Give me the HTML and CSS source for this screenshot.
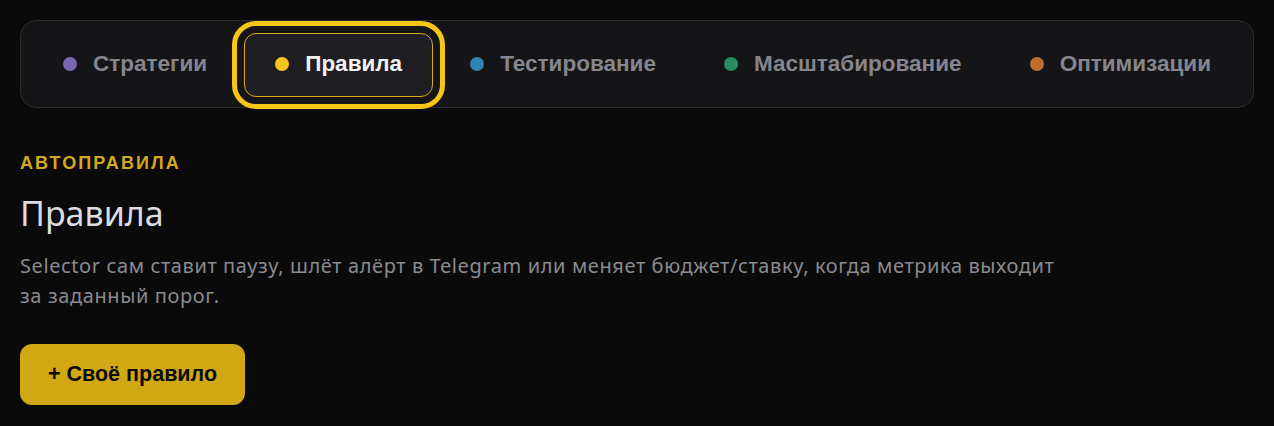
FILE: index.html
```html
<!DOCTYPE html>
<html lang="ru">
<head>
<meta charset="UTF-8">
<meta name="viewport" content="width=device-width, initial-scale=1.0">
<title>Правила</title>
<link rel="stylesheet" href="styles.css">
</head>
<body>
<div class="page">
    <nav class="tabs">
        <button class="tab"><span class="dot dot-purple"></span>Стратегии</button>
        <button class="tab active"><span class="dot dot-yellow"></span>Правила</button>
        <button class="tab"><span class="dot dot-blue"></span>Тестирование</button>
        <button class="tab"><span class="dot dot-green"></span>Масштабирование</button>
        <button class="tab"><span class="dot dot-orange"></span>Оптимизации</button>
    </nav>

    <section class="section">
        <div class="eyebrow">Автоправила</div>
        <h1>Правила</h1>
        <p class="lead">Selector сам ставит паузу, шлёт алёрт в Telegram или меняет бюджет/ставку, когда метрика выходит за заданный порог.</p>
        <button class="btn-primary">+ Своё правило</button>
    </section>
</div>
</body>
</html>
```

FILE: styles.css
```css
body {
    margin: 0;
    background-color: #0a0a0a;
    font-family: "Noto Sans", Roboto, sans-serif;
    color: #dcdce0;
}
.page {
    padding: 20px;
}
.tabs {
    display: flex;
    justify-content: space-between;
    padding: 12px 11px 10px;
    background-color: #151517;
    border: 1px solid #2c2c30;
    border-radius: 16px;
}
.tab {
    display: flex;
    align-items: center;
    gap: 16px;
    height: 64px;
    padding: 0 30px 3px;
    background: transparent;
    border: 1px solid transparent;
    border-radius: 12px;
    font-family: "Liberation Sans", Arial, sans-serif;
    font-size: 22.5px;
    font-weight: bold;
    color: #85858d;
    cursor: pointer;
}
.tab.active {
    color: #f2f2f4;
    background-color: #1f1f23;
    border-color: #d6ab18;
    outline: 5px solid #f5c518;
    outline-offset: 7px;
}
.dot {
    width: 14px;
    height: 14px;
    border-radius: 50%;
}
.dot-purple { background-color: #7a66b5; }
.dot-yellow { background-color: #f5c518; }
.dot-blue { background-color: #2f84b0; }
.dot-green { background-color: #2a8c62; }
.dot-orange { background-color: #bf6e30; }
.section {
    padding-top: 45px;
}
.eyebrow {
    font-family: "Liberation Sans", Arial, sans-serif;
    font-size: 18px;
    font-weight: bold;
    letter-spacing: 2.1px;
    text-transform: uppercase;
    color: #d4a81c;
    line-height: 20px;
}
h1 {
    margin: 20px 0 0;
    font-size: 34px;
    font-weight: 400;
    line-height: 40px;
    color: #dcdce0;
}
.lead {
    margin: 18px 0 0;
    max-width: 1045px;
    font-size: 20px;
    letter-spacing: 0.6px;
    line-height: 30px;
    color: #8a8a90;
}
.btn-primary {
    margin-top: 33px;
    height: 61px;
    padding: 0 28px;
    background-color: #d1a814;
    color: #0a0a0a;
    border: none;
    border-radius: 12px;
    font-family: "Liberation Sans", Arial, sans-serif;
    font-size: 21.5px;
    font-weight: bold;
    cursor: pointer;
}
```
